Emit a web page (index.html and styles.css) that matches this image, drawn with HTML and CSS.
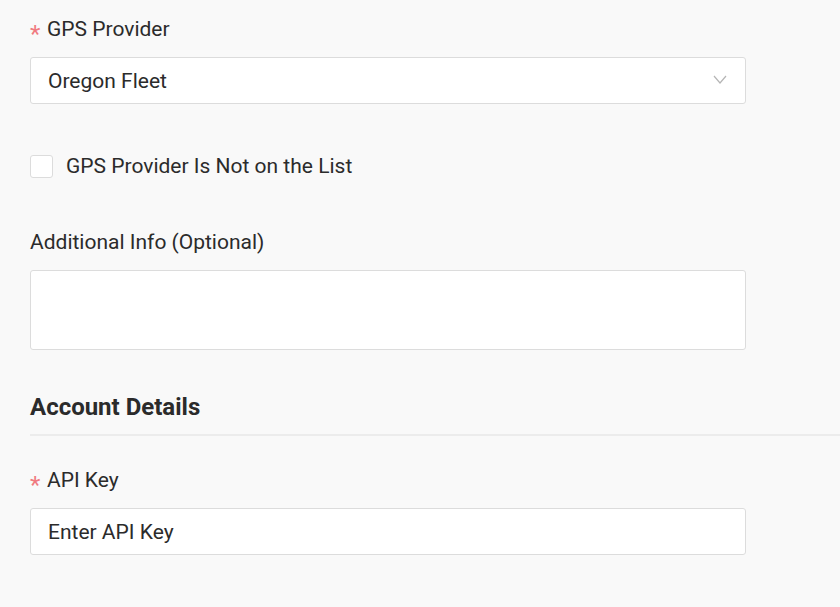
FILE: index.html
```html
<!DOCTYPE html>
<html lang="en">
  <head>
    <meta charset="UTF-8" />
    <title>GPS Provider</title>
    <link rel="stylesheet" href="styles.css">
  </head>
  <body>
    <form class="form">
      <div class="field">
        <label class="label"><span class="req">*</span>GPS Provider</label>
        <div class="select">
          <span>Oregon Fleet</span>
          <svg class="chevron" width="14" height="9" viewBox="0 0 14 9">
            <path d="M1 1 L7 8 L13 1" fill="none" stroke="#b5b5b5" stroke-width="1.2" />
          </svg>
        </div>
      </div>

      <label class="check">
        <span class="box"></span>
        GPS Provider Is Not on the List
      </label>

      <div class="field">
        <label class="label">Additional Info (Optional)</label>
        <div class="textarea"></div>
      </div>

      <h2 class="section">Account Details</h2>

      <div class="field">
        <label class="label"><span class="req">*</span>API Key</label>
        <div class="input">Enter API Key</div>
      </div>
    </form>
  </body>
</html>
```

FILE: styles.css
```css
body {
  margin: 0;
  background: #f9f9f9;
  font-family: Roboto, "Liberation Sans", sans-serif;
  color: #2b2b2b;
}

.form {
  padding: 15px 0 0 30px;
}

.field {
  width: 716px;
}

.label {
  display: flex;
  align-items: center;
  height: 28px;
  font-size: 21px;
  line-height: 28px;
  margin-bottom: 14px;
}

.req {
  color: #f07a80;
  font-size: 24px;
  line-height: 1;
  width: 17px;
  margin-top: 10px;
}

.select,
.input,
.textarea {
  box-sizing: border-box;
  background: #fff;
  border: 1px solid #dcdcdc;
  border-radius: 3px;
}

.select,
.input {
  height: 47px;
  display: flex;
  align-items: center;
  justify-content: space-between;
  padding: 0 18px 0 17px;
  font-size: 21px;
}

.chevron {
  margin-top: -2px;
}

.check {
  display: flex;
  align-items: center;
  gap: 13px;
  margin: 48px 0 0;
  font-size: 21px;
  line-height: 28px;
}

.box {
  box-sizing: border-box;
  width: 23px;
  height: 23px;
  background: #fff;
  border: 1px solid #dcdcdc;
  border-radius: 3px;
}

.check + .field {
  margin-top: 48px;
}

.textarea {
  height: 80px;
}

.section {
  font-size: 24px;
  font-weight: 700;
  line-height: 28px;
  margin: 43px 0 0;
  padding-bottom: 13px;
  border-bottom: 2px solid #ececec;
}

.section + .field {
  margin-top: 30px;
}
```
